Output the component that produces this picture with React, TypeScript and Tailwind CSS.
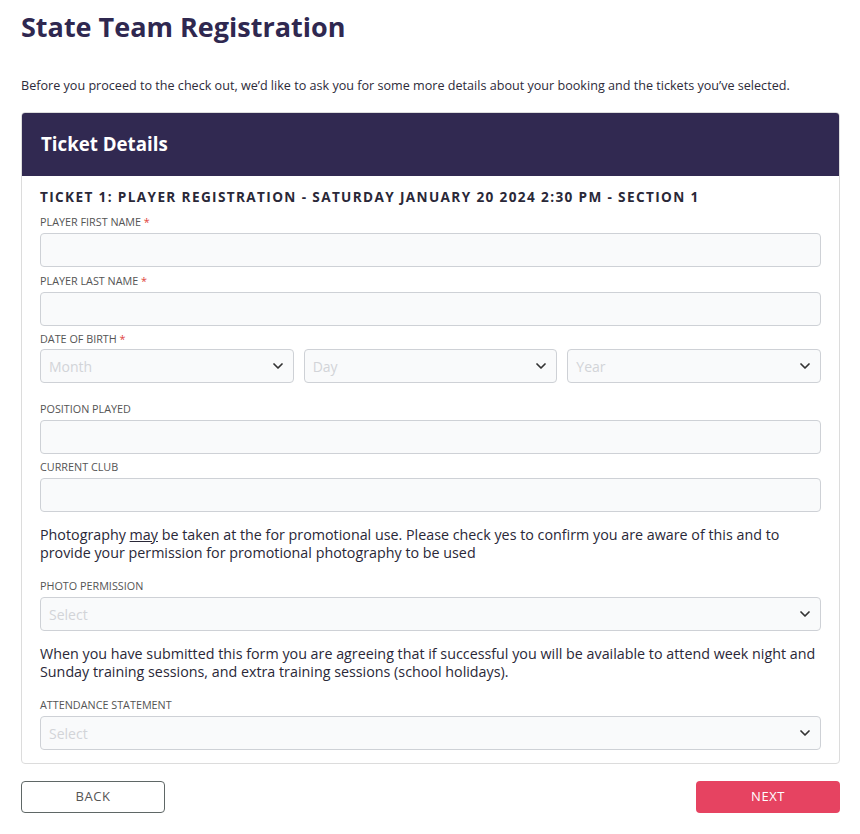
import { ChevronDown } from 'lucide-react';

function Label({ text, required }: { text: string; required?: boolean }) {
  return (
    <p className="text-[10.8px] leading-[12px] uppercase text-[#555]">
      {text}
      {required && <span className="text-[#e0443c]"> *</span>}
    </p>
  );
}

function TextInput() {
  return (
    <div className="mt-[5px] h-[34px] rounded-[4px] border border-[#ced1d6] bg-[#f9fafb]"></div>
  );
}

function SelectBox({ placeholder }: { placeholder: string }) {
  return (
    <div className="flex-1 h-[34px] rounded-[4px] border border-[#ced1d6] bg-[#f9fafb] flex items-center justify-between pl-2 pr-[7px]">
      <span className="text-[14px] text-[#d2d4d8]">{placeholder}</span>
      <ChevronDown size={16} strokeWidth={2.6} className="text-[#333]" />
    </div>
  );
}

export default function App() {
  return (
    <div className="min-h-screen bg-white pl-[21px] pr-[20px] pt-[10px] pb-6 text-[#333] font-['Open_Sans',sans-serif]">
      <h1 className="text-[27px] leading-[34px] font-bold text-[#2f2850]">
        State Team Registration
      </h1>
      <p className="mt-[33px] text-[12.6px] leading-[18px] text-[#2d2b3a]">
        Before you proceed to the check out, we’d like to ask you for some more details about your booking and the tickets you’ve selected.
      </p>

      {/* ticket card */}
      <div className="mt-[17px] rounded-[4px] border border-[#dcdcdc] overflow-hidden">
        <div className="bg-[#312951] h-[63px] flex items-center px-[19px]">
          <h2 className="text-[18.7px] font-bold text-white">Ticket Details</h2>
        </div>
        <div className="px-[18px] pt-[12px] pb-[13px]">
          <h3 className="text-[13.6px] leading-[18px] font-bold tracking-[0.1em] text-[#2a2838]">
            TICKET 1: PLAYER REGISTRATION - SATURDAY JANUARY 20 2024 2:30 PM - SECTION 1
          </h3>

          <div className="mt-[10px]">
            <Label text="Player First Name" required />
            <TextInput />
          </div>
          <div className="mt-[8px]">
            <Label text="Player Last Name" required />
            <TextInput />
          </div>
          <div className="mt-[7px]">
            <Label text="Date of Birth" required />
            <div className="mt-[4px] flex gap-[10px]">
              <SelectBox placeholder="Month" />
              <SelectBox placeholder="Day" />
              <SelectBox placeholder="Year" />
            </div>
          </div>
          <div className="mt-[20px]">
            <Label text="Position Played" />
            <TextInput />
          </div>
          <div className="mt-[7px]">
            <Label text="Current Club" />
            <TextInput />
          </div>

          <p className="mt-[14px] text-[14.3px] leading-[18px] text-[#2a2838]">
            Photography <span className="underline">may</span> be taken at the for promotional use. Please check yes to confirm you are aware of this and to provide your permission for promotional photography to be used
          </p>
          <div className="mt-[18px]">
            <Label text="Photo Permission" />
            <div className="mt-[5px] flex">
              <SelectBox placeholder="Select" />
            </div>
          </div>

          <p className="mt-[14px] text-[14.3px] leading-[18px] text-[#2a2838]">
            When you have submitted this form you are agreeing that if successful you will be available to attend week night and Sunday training sessions, and extra training sessions (school holidays).
          </p>
          <div className="mt-[18px]">
            <Label text="Attendance Statement" />
            <div className="mt-[5px] flex">
              <SelectBox placeholder="Select" />
            </div>
          </div>
        </div>
      </div>

      <div className="mt-[17px] flex justify-between">
        <button className="w-[144px] h-[32px] rounded-[4px] border border-[#5f6766] text-[13px] tracking-[0.04em] text-[#555]">
          BACK
        </button>
        <button className="w-[144px] h-[32px] rounded-[4px] bg-[#e64361] text-[13px] tracking-[0.04em] text-white">
          NEXT
        </button>
      </div>
    </div>
  );
}
